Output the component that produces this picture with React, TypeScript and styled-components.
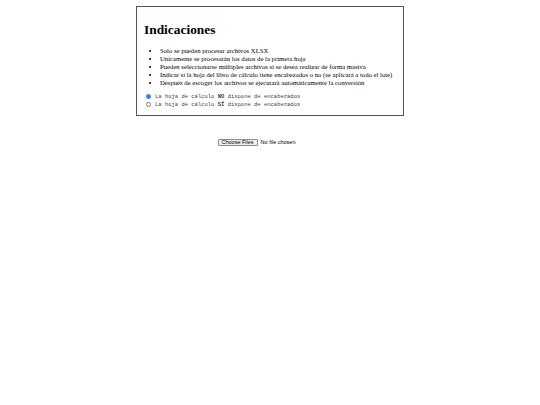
import React from 'react';
import styled, { createGlobalStyle } from 'styled-components';

const GlobalStyle = createGlobalStyle`
  html, body {
    margin: 0;
    padding: 0;
    background: #ffffff;
  }
  body {
    font-family: 'Liberation Serif', 'Times New Roman', serif;
    color: #000000;
  }
`

const Page = styled.div`
  display: flex;
  flex-direction: column;
  align-items: center;
  padding-top: 6px;
`

const Card = styled.section`
  box-sizing: border-box;
  width: 268px;
  border: 1px solid #555555;
  padding: 7px 7px 7px 7px;
`

const Title = styled.h1`
  font-family: 'Liberation Serif', 'Times New Roman', serif;
  font-weight: 700;
  font-size: 13.4px;
  line-height: 16px;
  margin: 8px 0 9px 0;
`

const List = styled.ul`
  margin: 0 0 6px 0;
  padding-left: 16px;
  font-size: 6.7px;
  line-height: 8px;
`

const Item = styled.li`
  margin: 0;
  white-space: nowrap;
`

const Options = styled.div`
  display: flex;
  flex-direction: column;
  gap: 1px;
`

const Option = styled.label`
  display: flex;
  align-items: center;
  gap: 4px;
  font-family: 'Liberation Mono', 'Courier New', monospace;
  font-size: 5.5px;
  line-height: 7px;
  color: #444444;
`

const Radio = styled.input`
  width: 5px;
  height: 5px;
  margin: 0 0 0 2px;
`

const Upload = styled.div`
  margin-top: 19px;
  text-align: center;
  width: 100%;
  line-height: 7px;
`

const FileInput = styled.input`
  font-family: 'Liberation Sans', Arial, sans-serif;
  font-size: 5.5px;
  color: #000000;

  &::file-selector-button {
    font-family: 'Liberation Sans', Arial, sans-serif;
    font-size: 5.5px;
    height: 7px;
    line-height: 5px;
    padding: 0 3px;
    margin-right: 3px;
    border: 1px solid #8f8f8f;
    border-radius: 1px;
    background: #efefef;
    color: #000000;
  }
`

export default function App() {
  const [headers, setHeaders] = React.useState('no');
  return (
    <>
      <GlobalStyle />
      <Page>
        <Card>
          <Title>Indicaciones</Title>
          <List>
            <Item>Solo se pueden procesar archivos XLSX</Item>
            <Item>Unicamente se procesarán los datos de la primera hoja</Item>
            <Item>Pueden seleccionarse múltiples archivos si se desea realizar de forma masiva</Item>
            <Item>Indicar si la hoja del libro de cálculo tiene encabezados o no (se aplicará a todo el lote)</Item>
            <Item>Después de escoger los archivos se ejecutará automáticamente la conversión</Item>
          </List>
          <Options>
            <Option>
              <Radio type="radio" name="headers" checked={headers === 'no'} onChange={() => setHeaders('no')} />
              <span>La hoja de cálculo <b>NO</b> dispone de encabezados</span>
            </Option>
            <Option>
              <Radio type="radio" name="headers" checked={headers === 'si'} onChange={() => setHeaders('si')} />
              <span>La hoja de cálculo <b>SÍ</b> dispone de encabezados</span>
            </Option>
          </Options>
        </Card>
        <Upload>
          <FileInput type="file" multiple accept=".xlsx" />
        </Upload>
      </Page>
    </>
  );
}
